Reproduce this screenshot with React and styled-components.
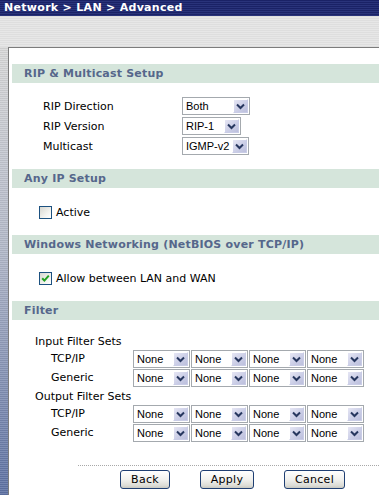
import styled, { createGlobalStyle } from "styled-components";

const GlobalStyle = createGlobalStyle`
  html, body {
    margin: 0;
    padding: 0;
    background: #ffffff;
    font-family: "DejaVu Sans", Verdana, sans-serif;
    font-size: 11px;
  }
`;

const TitleBar = styled.div`
  height: 16px;
  padding-left: 4px;
  background: repeating-linear-gradient(
    to bottom,
    #1a2266 0px,
    #1a2266 1px,
    #29337a 1px,
    #29337a 2px
  );
  color: #ffffff;
  font-weight: bold;
  font-size: 11px;
  line-height: 15px;
  letter-spacing: 0.3px;
  white-space: nowrap;
`;

const Main = styled.div`
  display: grid;
  grid-template-columns: 8px 1fr;
  grid-template-rows: 31px 1fr;
  height: 479px;
  overflow: hidden;
  background: repeating-linear-gradient(
    to bottom,
    #dedede 0px,
    #dedede 1px,
    #e7e7e7 1px,
    #e7e7e7 2px
  );
`;

const Strip = styled.div`
  grid-column: 1;
  grid-row: 2;
  background:
    repeating-linear-gradient(
      to bottom,
      rgba(255, 255, 255, 0.12) 0px,
      rgba(255, 255, 255, 0.12) 1px,
      rgba(0, 0, 0, 0.05) 1px,
      rgba(0, 0, 0, 0.05) 2px
    ),
    linear-gradient(to bottom, #d9d9d9 0%, #b3b9c9 45%, #5d71a3 100%);
`;

const Panel = styled.div`
  grid-column: 2;
  grid-row: 2;
  background: #ffffff;
  border-top: 1px solid #7c7c7c;
  border-left: 1px solid #7c7c7c;
  padding: 16px 0 0 3px;
`;

const SectionHead = styled.div`
  height: 19px;
  line-height: 19px;
  padding-left: 12px;
  background: #d5e5db;
  color: #56678b;
  font-weight: bold;
  font-size: 11px;
  letter-spacing: 0.2px;
  white-space: nowrap;
`;

const SectionBody = styled.div`
  padding: ${(p) => p.$top ?? 13}px 0 ${(p) => p.$bottom ?? 13}px ${(p) => p.$left ?? 31}px;
`;

const FieldRow = styled.div`
  display: flex;
  align-items: center;
  height: 20px;
`;

const FieldLabel = styled.div`
  width: 139px;
  color: #000000;
  white-space: nowrap;
`;

const SelectBox = styled.div`
  box-sizing: border-box;
  display: flex;
  align-items: center;
  justify-content: space-between;
  width: ${(p) => p.$w}px;
  height: 18px;
  border: 1px solid #a4a9ae;
  background: #ffffff;
  padding: 1px;
  font-family: "Liberation Sans", Arial, sans-serif;
  font-size: 11px;
  color: #000000;
`;

const SelectText = styled.span`
  padding-left: 2px;
  white-space: nowrap;
`;

const ArrowBtn = styled.span`
  box-sizing: border-box;
  display: flex;
  align-items: center;
  justify-content: center;
  width: 15px;
  height: 14px;
  background: linear-gradient(to bottom right, #e6e6f4 0%, #cacde6 60%, #bcbfdc 100%);
  border: 1px solid #c9cce6;
  border-left-color: #ffffff;
  border-top-color: #ffffff;
`;

const Select = ({ value, w }) => (
  <SelectBox $w={w}>
    <SelectText>{value}</SelectText>
    <ArrowBtn>
      <svg width="9" height="7" viewBox="0 0 9 7">
        <path d="M1 1.5 L4.5 5 L8 1.5" fill="none" stroke="#27375f" strokeWidth="2" />
      </svg>
    </ArrowBtn>
  </SelectBox>
);

const CheckRow = styled.label`
  display: flex;
  align-items: center;
  gap: 4px;
  height: 20px;
  padding-left: 8px;
  color: #000000;
  white-space: nowrap;
`;

const Box = styled.span`
  box-sizing: border-box;
  display: inline-flex;
  align-items: center;
  justify-content: center;
  width: 13px;
  height: 13px;
  border: 1px solid #1c5180;
  background: linear-gradient(to bottom right, #d7d7d0 0%, #f2f2ee 60%, #ffffff 100%);
`;

const Check = ({ checked }) => (
  <Box>
    {checked && (
      <svg width="9" height="9" viewBox="0 0 9 9">
        <path d="M1.2 4.2 L3.4 6.6 L7.8 1.6" fill="none" stroke="#21a121" strokeWidth="2" />
      </svg>
    )}
  </Box>
);

const GroupLabel = styled.div`
  height: 17px;
  line-height: 17px;
  color: #000000;
  white-space: nowrap;
`;

const FilterRow = styled.div`
  display: flex;
  align-items: flex-start;
  height: 19px;
`;

const FilterLabel = styled.div`
  width: 82px;
  padding-left: 16px;
  line-height: 18px;
  color: #000000;
`;

const FilterSelects = styled.div`
  display: flex;
  gap: 1px;
`;

const Footer = styled.div`
  margin: 22px 0 0 66px;
  border-top: 1px dotted #a8a8a8;
  padding: 4px 0 0 42px;
  display: flex;
  gap: 30px;
`;

const Button = styled.button`
  box-sizing: border-box;
  width: ${(p) => p.$w}px;
  height: 19px;
  padding: 0;
  border: 1px solid #1f3f73;
  border-radius: 3px;
  background: linear-gradient(to bottom, #ffffff 0%, #f1f1ee 50%, #dcdcd6 85%, #c9c9c2 100%);
  font-family: "DejaVu Sans", Verdana, sans-serif;
  font-size: 11px;
  color: #000000;
  letter-spacing: 0.3px;
`;

const filterRows = [
  { group: "Input Filter Sets", rows: ["TCP/IP", "Generic"] },
  { group: "Output Filter Sets", rows: ["TCP/IP", "Generic"] },
];

export default function App() {
  return (
    <>
      <GlobalStyle />
      <TitleBar>Network &gt; LAN &gt; Advanced</TitleBar>
      <Main>
        <Strip />
        <Panel>
          <SectionHead>RIP &amp; Multicast Setup</SectionHead>
          <SectionBody $top={13} $bottom={13}>
            <FieldRow>
              <FieldLabel>RIP Direction</FieldLabel>
              <Select value="Both" w={68} />
            </FieldRow>
            <FieldRow>
              <FieldLabel>RIP Version</FieldLabel>
              <Select value="RIP-1" w={59} />
            </FieldRow>
            <FieldRow>
              <FieldLabel>Multicast</FieldLabel>
              <Select value="IGMP-v2" w={67} />
            </FieldRow>
          </SectionBody>

          <SectionHead>Any IP Setup</SectionHead>
          <SectionBody $top={14} $bottom={13} $left={19}>
            <CheckRow>
              <Check />
              Active
            </CheckRow>
          </SectionBody>

          <SectionHead>Windows Networking (NetBIOS over TCP/IP)</SectionHead>
          <SectionBody $top={14} $bottom={13} $left={19}>
            <CheckRow>
              <Check checked />
              Allow between LAN and WAN
            </CheckRow>
          </SectionBody>

          <SectionHead>Filter</SectionHead>
          <SectionBody $top={13} $bottom={0} $left={23}>
            {filterRows.map((g) => (
              <div key={g.group}>
                <GroupLabel>{g.group}</GroupLabel>
                {g.rows.map((r) => (
                  <FilterRow key={r}>
                    <FilterLabel>{r}</FilterLabel>
                    <FilterSelects>
                      {[0, 1, 2, 3].map((i) => (
                        <Select key={i} value="None" w={57} />
                      ))}
                    </FilterSelects>
                  </FilterRow>
                ))}
              </div>
            ))}
          </SectionBody>

          <Footer>
            <Button $w={50}>Back</Button>
            <Button $w={54}>Apply</Button>
            <Button $w={61}>Cancel</Button>
          </Footer>
        </Panel>
      </Main>
    </>
  );
}
